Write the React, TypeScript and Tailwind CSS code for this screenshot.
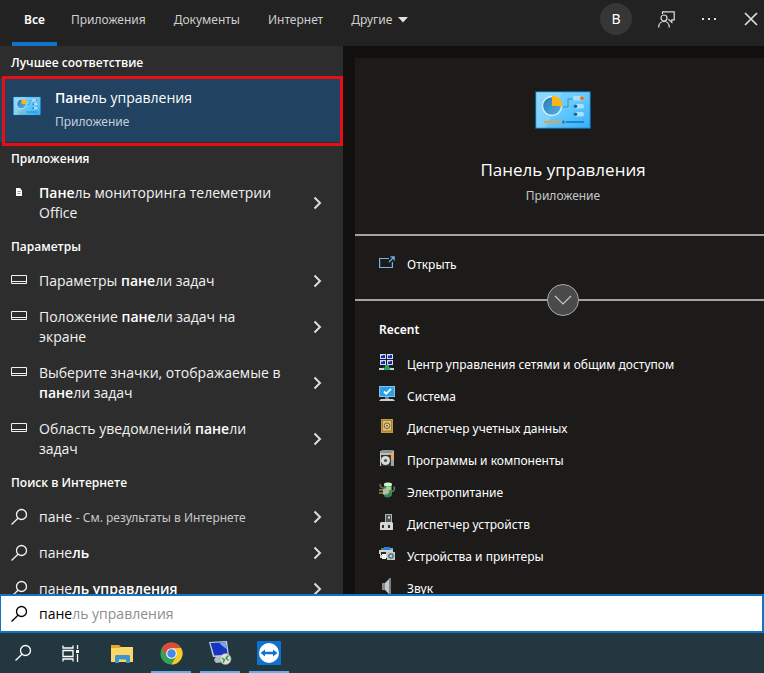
import type { ReactNode } from 'react';

const tabs = ['Приложения', 'Документы', 'Интернет'];

function Magnifier({ className = '' }: { className?: string }) {
  return (
    <svg width="18" height="18" viewBox="0 0 18 18" fill="none" stroke="currentColor" strokeWidth="1.3" className={className} aria-hidden="true">
      <circle cx="10.500" cy="6.500" r="5" />
      <path d="M7 10.200.500 16.500" />
    </svg>
  );
}

function ChevronRight() {
  return (
    <svg width="10" height="14" viewBox="0 0 10 14" fill="none" stroke="#dcdcdc" strokeWidth="2" aria-hidden="true">
      <path d="M1.500 1.500 7 7l-5.500 5.500" />
    </svg>
  );
}

function TaskbarSettingIcon() {
  return (
    <svg width="16" height="9" viewBox="0 0 16 9" fill="none" stroke="#f0f0f0" className="mb-1" aria-hidden="true">
      <path d="M.5.5h15v8H.5zM.5 6.500h15" />
    </svg>
  );
}

function DocumentIcon() {
  return (
    <svg width="16" height="10" viewBox="0 0 16 10" className="mb-0.5" aria-hidden="true">
      <path d="M5 1h4l2 2.500V9H5z" fill="#fff" />
      <path d="M6.500 4.500h3M6.500 6.500h3" stroke="#777" strokeWidth=".8" />
    </svg>
  );
}

function ControlPanelIcon({ className }: { className: string }) {
  return (
    <svg viewBox="0 0 56 40" className={className} aria-hidden="true">
      <defs>
        <linearGradient id="board" x1="0" y1="0" x2="1" y2="1">
          <stop offset="0" stopColor="#7fd3fb" />
          <stop offset=".45" stopColor="#6accfd" />
          <stop offset="1" stopColor="#36b0f8" />
        </linearGradient>
        <linearGradient id="pie" x1="0" y1="0" x2="1" y2="1">
          <stop offset="0" stopColor="#2478b5" />
          <stop offset="1" stopColor="#5bb1e2" />
        </linearGradient>
      </defs>
      <rect y="1" width="56" height="38" rx="1" fill="#0c5f94" />
      <rect x="1.200" y="2.200" width="53.600" height="35.600" fill="url(#board)" />
      <path d="M1.200 2.200h26L11 37.800H1.200z" fill="#fff" opacity=".15" />
      <circle cx="17" cy="16" r="9.500" fill="url(#pie)" stroke="#d9f2fe" strokeWidth="1.300" />
      <path d="M17 16V5.500A10.500 10.500 0 0 1 27.500 16z" fill="#fdb515" />
      <path d="M27.500 17h5.500V9h5" stroke="#2b93d0" fill="none" />
      <rect x="38" y="6" width="11" height="4.500" rx="2" fill="#a9e0fd" />
      <circle cx="47" cy="8.200" r="2" fill="#e9731c" />
      <rect x="39" y="14" width="10" height="4.500" rx="2" fill="#a9e0fd" />
      <circle cx="40.500" cy="16.200" r="1.800" fill="#0d67a6" />
      <rect x="39" y="22" width="10" height="4.500" rx="2" fill="#a9e0fd" />
      <circle cx="40.500" cy="24.200" r="1.800" fill="#0d67a6" />
      <path d="M9 32h18" stroke="#dca54b" strokeWidth="2" />
      <path d="M31 32h18" stroke="#1579c0" strokeWidth="1.600" />
      <circle cx="28.500" cy="32" r="1.500" fill="#1579c0" />
    </svg>
  );
}

function SectionTitle({ children }: { children: ReactNode }) {
  return <h2 className="flex h-8 items-center pt-0.5 pl-[11px] text-xs font-semibold text-white">{children}</h2>;
}

function ResultRow({ icon, children }: { icon: ReactNode; children: ReactNode }) {
  return (
    <li>
      <button type="button" className="flex w-full items-center pt-[9px] pr-5 pb-[7px] pl-[11px] text-left text-sm leading-5 text-[#f2f2f2]">
        <span className="flex h-5 w-7 shrink-0 items-center self-start">{icon}</span>
        <span className="min-w-0 flex-1 pr-[30px]">{children}</span>
        <ChevronRight />
      </button>
    </li>
  );
}

const B = ({ children }: { children: ReactNode }) => <b className="font-semibold text-white">{children}</b>;

const networkIcon = (
  <svg width="16" height="17" viewBox="0 0 16 17" aria-hidden="true">
    {[[1, 0], [8, 0], [1, 6], [8, 6]].map(([x, y]) => (
      <g key={`${x}-${y}`}>
        <rect x={x} y={y} width="6" height="5" fill="#d4d8ee" />
        <rect x={x + 1} y={y + 1} width="4" height="3" fill="#1b2ab0" />
        <rect x={x + 1} y={y + 1} width="2" height="1" fill="#7f9af5" />
      </g>
    ))}
    <path d="M6 11h4v2.500h2V16H4v-2.500h2z" fill="#1fa564" />
    <path d="M0 14h5v2H0zM11 14h4v2h-4z" fill="#c8d8cf" />
  </svg>
);

const systemIcon = (
  <svg width="16" height="16" viewBox="0 0 16 16" aria-hidden="true">
    <rect width="16" height="11" fill="#8fcdf2" />
    <rect x=".8" y=".8" width="14.400" height="9.400" fill="#2d9ee8" />
    <path d="M5 5.500 7.200 7.700 12 2.800" fill="none" stroke="#fff" strokeWidth="1.800" />
    <path d="M6 11h4v2H6z" fill="#6e8797" />
    <path d="M2 13h12l2 2H0z" fill="#c5d3dc" />
  </svg>
);

const safeIcon = (
  <svg width="16" height="16" viewBox="0 0 16 16" aria-hidden="true">
    <rect x="2" y="1" width="12" height="14" fill="#c59a43" />
    <rect x="3.500" y="2.500" width="9" height="10.500" fill="#dfc078" stroke="#9b742c" strokeWidth=".8" />
    <circle cx="8" cy="7.700" r="2.800" fill="#e9d49c" stroke="#765724" />
    <circle cx="8" cy="7.700" r="1" fill="#765724" />
  </svg>
);

const programsIcon = (
  <svg width="16" height="17" viewBox="0 0 16 17" aria-hidden="true">
    <path d="M1 1h14v4H1z" fill="#bdbcb5" />
    <path d="M3 0h12l-2 3H1z" fill="#8f918f" />
    <path d="M10 4h5v7h-4z" fill="#e6a75c" />
    <rect x="1" y="5" width="11" height="11" fill="#343837" />
    <path d="M1 3h1v13H1z" fill="#c9cbc9" />
    <circle cx="6.500" cy="10.500" r="4.500" fill="#d5dbda" />
    <circle cx="6.500" cy="10.500" r="1.600" fill="#4a5154" />
    <path d="M12 10h3v6h-3z" fill="#96a5ae" />
  </svg>
);

const powerIcon = (
  <svg width="16" height="16" viewBox="0 0 16 16" aria-hidden="true">
    <path d="M5 2c1-2 8-2 8 1v10c-1 3-7 3-8 1z" fill="#318c43" />
    <ellipse cx="9" cy="2.500" rx="4" ry="1.900" fill="#d7f0d8" />
    <path d="M7 5c2-1 4-1 5 0v3H7z" fill="#91db83" />
    <path d="M0 8h4M0 11h4" stroke="#d9c43c" strokeWidth="1.200" />
    <path d="M4 6.500h4l3 3-3 3H4z" fill="#b9bab6" />
    <path d="M10 9.500c5 1 6-2 5-5" fill="none" stroke="#77817a" strokeWidth="1.300" />
    <path d="M1 2c0 3 2 4 4 4" fill="none" stroke="#59645d" strokeWidth="1.800" />
  </svg>
);

const deviceManagerIcon = (
  <svg width="16" height="16" viewBox="0 0 16 16" aria-hidden="true">
    <rect x="6.500" y=".5" width="6" height="9" fill="#52575a" stroke="#aeb2b4" />
    <path d="M9 2.500h2v2H9z" fill="#d3d8db" />
    <path d="M2 8h11l1 1v7H1V9z" fill="#d6d6d6" />
    <path d="M3 11h2v3H3zM9 11h2v3H9z" fill="#303030" />
  </svg>
);

const printersIcon = (
  <svg width="16" height="16" viewBox="0 0 16 16" aria-hidden="true">
    <path d="M2 2h4v3H2z" fill="#3a9d62" />
    <path d="M5 1h6v4H5z" fill="#3279d3" />
    <path d="M11 2h3v3h-3z" fill="#53b5da" />
    <path d="M0 4h14v4H8v4H1V8H0z" fill="#cfd3d5" />
    <path d="M2 6h5v3H2z" fill="#272b2d" />
    <path d="M3 8h4v5H3z" fill="#f5f5f5" />
    <rect x="8" y="6" width="8" height="8" fill="#bfc8cc" />
    <circle cx="12" cy="10" r="2.800" fill="#52646d" />
    <circle cx="12" cy="10" r="1.500" fill="#b6d5df" />
  </svg>
);

const soundIcon = (
  <svg width="16" height="17" viewBox="0 0 16 17" aria-hidden="true">
    <path d="M3 5h3v7H3z" fill="#868b8f" />
    <path d="M6 5 11 0v17l-5-5z" fill="#c4c8ca" />
    <path d="M10 0h2v17h-2z" fill="#7c8083" />
  </svg>
);

const recent: { label: string; icon: ReactNode }[] = [
  { label: 'Центр управления сетями и общим доступом', icon: networkIcon },
  { label: 'Система', icon: systemIcon },
  { label: 'Диспетчер учетных данных', icon: safeIcon },
  { label: 'Программы и компоненты', icon: programsIcon },
  { label: 'Электропитание', icon: powerIcon },
  { label: 'Диспетчер устройств', icon: deviceManagerIcon },
  { label: 'Устройства и принтеры', icon: printersIcon },
  { label: 'Звук', icon: soundIcon },
];

function Header() {
  return (
    <header className="flex h-[46px] shrink-0 items-stretch justify-between bg-[#222222] font-['Noto_Sans',sans-serif] text-xs text-[#cfcfcf]">
      <nav className="flex items-stretch gap-7 pl-3">
        <button type="button" className="-mr-3.5 w-[45px] border-b-4 border-[#1272c4] pb-0.5 font-semibold text-white">
          Все
        </button>
        {tabs.map((tab) => (
          <button key={tab} type="button" className="pb-1.5">
            {tab}
          </button>
        ))}
        <button type="button" className="flex items-center gap-1.5 pb-1.5">
          Другие
          <svg width="10" height="6" viewBox="0 0 10 6" fill="#e0e0e0" aria-hidden="true">
            <path d="M0 0h10L5 5.500z" />
          </svg>
        </button>
      </nav>
      <div className="flex items-center pr-[5px] pb-2 text-[#dedede]">
        <button type="button" aria-label="Учетная запись" className="size-8 rounded-full bg-[#363636] text-sm text-white">
          B
        </button>
        <button type="button" aria-label="Отзыв" className="ml-[26px]">
          <svg width="17" height="17" viewBox="0 0 17 17" fill="none" stroke="currentColor" strokeWidth="1.200" aria-hidden="true">
            <path d="M4.500 3V.8h11.700v8h-2.400v2.600l-2.600-2.600h-1" />
            <circle cx="6" cy="7" r="3" />
            <path d="M.7 16.500c0-8 10.600-8 10.600 0" />
          </svg>
        </button>
        <button type="button" aria-label="Параметры" className="ml-[26px]">
          <svg width="16" height="4" viewBox="0 0 16 4" fill="currentColor" aria-hidden="true">
            <path d="M1 1h2v2H1zM7 1h2v2H7zM13 1h2v2h-2z" />
          </svg>
        </button>
        <button type="button" aria-label="Закрыть" className="ml-[26px]">
          <svg width="16" height="16" viewBox="0 0 16 16" fill="none" stroke="currentColor" strokeWidth="1.700" aria-hidden="true">
            <path d="m2 2 12 12M14 2 2 14" />
          </svg>
        </button>
      </div>
    </header>
  );
}

function Results() {
  return (
    <section className="w-[343px] shrink-0 overflow-hidden bg-[#2d2d2d]">
      <SectionTitle>Лучшее соответствие</SectionTitle>
      <div className="relative">
        <button type="button" className="flex h-16 w-full items-start bg-[#214260] pt-2 pl-[13px] text-left">
          <ControlPanelIcon className="mt-2.5 h-5 w-7" />
          <span className="ml-3.5">
            <span className="block text-sm leading-6 text-white">
              <B>Пане</B>ль управления
            </span>
            <span className="block font-['Noto_Sans',sans-serif] text-xs leading-6 text-[#c3d0dc]">Приложение</span>
          </span>
        </button>
        <div className="pointer-events-none absolute -top-0.5 right-0 -bottom-1 left-0.5 border-[3px] border-[#e50f14] bg-transparent" />
      </div>
      <SectionTitle>Приложения</SectionTitle>
      <ul>
        <ResultRow icon={<DocumentIcon />}>
          <B>Пане</B>ль мониторинга телеметрии Office
        </ResultRow>
      </ul>
      <SectionTitle>Параметры</SectionTitle>
      <ul>
        <ResultRow icon={<TaskbarSettingIcon />}>
          Параметры <B>пане</B>ли задач
        </ResultRow>
        <ResultRow icon={<TaskbarSettingIcon />}>
          Положение <B>пане</B>ли задач на экране
        </ResultRow>
        <ResultRow icon={<TaskbarSettingIcon />}>
          Выберите значки, отображаемые в <B>пане</B>ли задач
        </ResultRow>
        <ResultRow icon={<TaskbarSettingIcon />}>
          Область уведомлений <B>пане</B>ли задач
        </ResultRow>
      </ul>
      <SectionTitle>Поиск в Интернете</SectionTitle>
      <ul>
        <ResultRow icon={<Magnifier />}>
          пане <span className="font-['Noto_Sans',sans-serif] text-xs text-[#c8c8c8]">- См. результаты в Интернете</span>
        </ResultRow>
        <ResultRow icon={<Magnifier />}>
          пане<B>ль</B>
        </ResultRow>
        <ResultRow icon={<Magnifier />}>
          пане<B>ль управления</B>
        </ResultRow>
      </ul>
    </section>
  );
}

function Details() {
  return (
    <section className="min-w-0 flex-1 overflow-hidden bg-[#11100f] pt-3 pl-3">
      <div className="-mr-[7px] min-h-full bg-[#1c1b1a] font-['Noto_Sans',sans-serif] text-xs text-white">
        <div className="flex h-[176px] flex-col items-center pt-8">
          <ControlPanelIcon className="h-10 w-14" />
          <h1 className="mt-7 font-['Open_Sans',sans-serif] text-[17px] leading-6">Панель управления</h1>
          <p className="mt-0.5 leading-6 text-[#c8c8c8]">Приложение</p>
        </div>
        <div className="relative h-[67px] border-y-2 border-[#a3a3a1]">
          <button type="button" className="flex h-[58px] w-full items-center pl-6">
            <svg width="16" height="12" viewBox="0 0 16 12" fill="none" stroke="#70b3ee" strokeWidth="1.200" className="mb-1.5" aria-hidden="true">
              <path d="M10 2.500H.6v9h12.800V6M10 6l5-5M11.500.8h3.700v3.700" />
            </svg>
            <span className="ml-3">Открыть</span>
          </button>
          <button
            type="button"
            aria-label="Развернуть"
            className="absolute -bottom-[17px] left-1/2 flex size-8 -translate-x-1/2 items-center justify-center rounded-full border border-[#a8a8a8] bg-[#4a4a4a]"
          >
            <svg width="18" height="10" viewBox="0 0 18 10" fill="none" stroke="#c6c6c6" strokeWidth="1.200" aria-hidden="true">
              <path d="m1 1 8 8 8-8" />
            </svg>
          </button>
        </div>
        <h2 className="pt-[17px] pb-[7px] pl-6 leading-6 font-semibold">Recent</h2>
        <ul>
          {recent.map(({ label, icon }) => (
            <li key={label}>
              <button type="button" className="flex h-8 w-full items-center gap-3 pl-6 text-left">
                <span className="mb-1.5">{icon}</span>
                {label}
              </button>
            </li>
          ))}
        </ul>
      </div>
    </section>
  );
}

function SearchBox() {
  return (
    <label className="flex h-[39px] shrink-0 items-center border-2 border-[#1272c4] border-l-[1px] bg-white pl-2.5 text-sm">
      <Magnifier className="text-black" />
      <input
        type="text"
        aria-label="Поиск"
        defaultValue="пане"
        className="ml-2.5 [field-sizing:content] bg-transparent text-black outline-none"
      />
      <span className="text-[#8e8e8e]">ль управления</span>
    </label>
  );
}

function Taskbar() {
  return (
    <footer className="flex h-10 shrink-0 items-stretch bg-[#223740] pl-3.5 text-white">
      <button type="button" aria-label="Поиск" className="flex w-[19px] items-center justify-center">
        <Magnifier />
      </button>
      <button type="button" aria-label="Представление задач" className="ml-7 flex w-5 items-center justify-center">
        <svg width="18" height="17" viewBox="0 0 18 17" fill="none" stroke="currentColor" strokeWidth="1.300" aria-hidden="true">
          <path d="M1 .5V3h10V.5M1 16.500V14h10v2.500M1 5.500h10v6H1zM15.500 0v4M15.500 9v8" />
          <path d="M14 5h3v3h-3z" fill="currentColor" stroke="none" />
        </svg>
      </button>
      <button type="button" aria-label="Проводник" className="ml-[22px] flex w-[38px] items-center justify-center">
        <svg width="22" height="19" viewBox="0 0 22 19" aria-hidden="true">
          <path d="M0 1h8l2 2h12v15H0z" fill="#e5a823" />
          <path d="M0 4h9l1-1h12v15H0z" fill="#fbd767" />
          <path d="M4 19v-7l1-1h13l1 1v7h-4v-3.500H8V19z" fill="#3c95cd" />
        </svg>
      </button>
      <button type="button" aria-label="Chrome" className="ml-2.5 flex w-10 items-center justify-center border-b-2 border-[#65afe6] pt-0.5">
        <svg width="23" height="23" viewBox="0 0 24 24" aria-hidden="true">
          <circle cx="12" cy="12" r="11.500" fill="#36a156" />
          <path d="M12 6.250h9.960A11.500 11.500 0 0 1 12 23.500l5-8.600z" fill="#fbc927" />
          <path d="M7 14.900 2.040 6.250A11.500 11.500 0 0 1 21.960 6.250H12z" fill="#de4a3c" />
          <circle cx="12" cy="12" r="5.600" fill="#f4f6f5" />
          <circle cx="12" cy="12" r="4.400" fill="#4488ec" />
        </svg>
      </button>
      <button type="button" aria-label="Удаленный рабочий стол" className="ml-[9px] flex w-10 items-center justify-center border-b-2 border-[#65afe6] pt-0.5">
        <svg width="24" height="24" viewBox="0 0 24 24" aria-hidden="true">
          <path d="M8 15h8l1 6-9 1-2-3z" fill="#b5bcc3" />
          <path d="m1 1 18-1 2 15-16 1z" fill="#c3d1e2" />
          <path d="m2.500 2 15.300-.8 1.800 12.600-13.400.8z" fill="#1734c3" />
          <path d="m11 1.600 6.800-.4 1 7c-3-2-6-4-7.800-6.600z" fill="#7ba3f0" />
          <circle cx="17.500" cy="18" r="5.500" fill="#dcdfd9" stroke="#959e99" strokeWidth=".6" />
          <path d="m14 17 2.500 2-1.500 2.500M20.500 14.500 18 17l2.500 2.500" fill="none" stroke="#39964b" strokeWidth="1.500" />
        </svg>
      </button>
      <button type="button" aria-label="TeamViewer" className="ml-[9px] flex w-10 items-center justify-center border-b-2 border-[#65afe6] pt-0.5">
        <svg width="24" height="24" viewBox="0 0 24 24" aria-hidden="true">
          <rect width="24" height="24" rx="1" fill="#0e72d1" />
          <circle cx="12" cy="12" r="10" fill="#fff" />
          <path d="m3.500 12 4.500-3.500v2.300h8V8.500l4.500 3.500-4.500 3.500v-2.300H8v2.300z" fill="#0e72d1" />
        </svg>
      </button>
    </footer>
  );
}

export default function App() {
  return (
    <div className="flex h-screen flex-col overflow-hidden bg-[#11100f] font-['Open_Sans','Noto_Sans',sans-serif]">
      <Header />
      <main className="flex min-h-0 flex-1">
        <Results />
        <Details />
      </main>
      <SearchBox />
      <Taskbar />
    </div>
  );
}
